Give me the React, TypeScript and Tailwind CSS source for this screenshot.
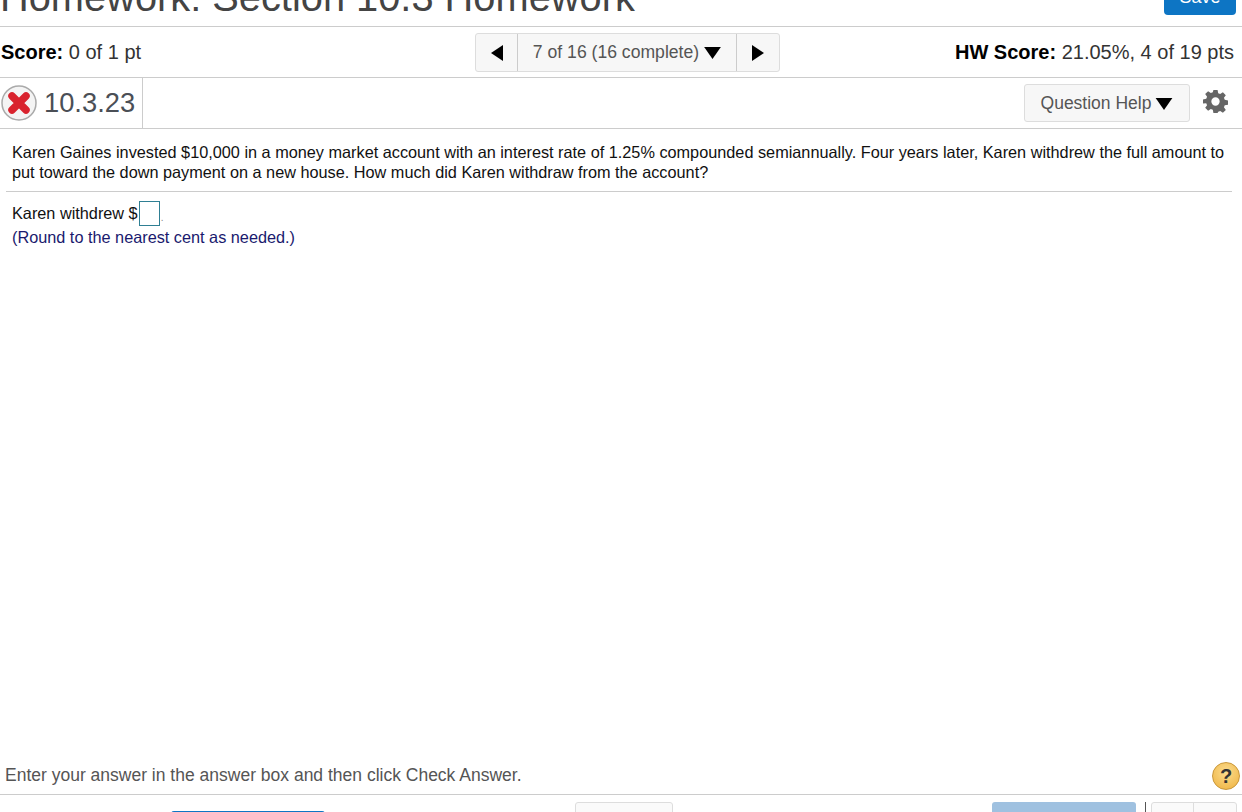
import React from 'react';

const Caret = ({ className }: { className: string }) => (
  <svg className={className} viewBox="0 0 18 14" fill="currentColor">
    <path d="M0 1h18L9 14z" />
  </svg>
);

export default function App() {
  return (
    <div className="h-[812px] overflow-hidden bg-white flex flex-col font-['Liberation_Sans',Arial,sans-serif] text-[#333]">
      {/* Title bar, cut off by the top of the window */}
      <header className="h-[27px] flex-none border-b border-[#ccc] flex justify-between overflow-hidden">
        <h1 className="text-[39.8px] leading-[44px] -mt-[25px] text-[#444] whitespace-nowrap font-normal">
          Homework: Section 10.3 Homework
        </h1>
        <button className="w-[72px] h-[15px] mr-[6px] bg-[#0d75c4] rounded-b-[4px] text-white text-[18px] leading-[18px] overflow-hidden flex-none">
          <span className="block -mt-[20px]">Save</span>
        </button>
      </header>

      {/* Score row */}
      <div className="h-[51px] flex-none border-b border-[#ccc] flex items-center justify-between pl-[1px] pr-[8px] text-[20px] relative">
        <div className="text-[#333]">
          <b className="text-black">Score:</b> 0 of 1 pt
        </div>
        <div className="absolute left-[475px] top-[6px] h-[39px] w-[305px] flex border border-[#ddd] rounded-[3px] bg-[#f7f7f7] text-[#555] text-[17.6px]">
          <div className="w-[42px] flex items-center justify-center border-r border-[#ccc]">
            <svg className="w-[12px] h-[16px] text-black" viewBox="0 0 12 16" fill="currentColor">
              <path d="M12 0v16L0 8z" />
            </svg>
          </div>
          <div className="flex-1 flex items-center justify-center gap-[5px]">
            <span>7 of 16 (16 complete)</span>
            <Caret className="w-[17px] h-[13px] text-black" />
          </div>
          <div className="w-[43px] flex items-center justify-center border-l border-[#ccc]">
            <svg className="w-[12px] h-[16px] text-black" viewBox="0 0 12 16" fill="currentColor">
              <path d="M0 0v16l12-8z" />
            </svg>
          </div>
        </div>
        <div className="text-[#333]">
          <b className="text-black">HW Score:</b> 21.05%, 4 of 19 pts
        </div>
      </div>

      {/* Question number row */}
      <div className="h-[51px] flex-none border-b border-[#ccc] flex items-center justify-between pr-[14px]">
        <div className="flex items-center h-full">
          <svg className="w-[36px] h-[36px] ml-[1px]" viewBox="0 0 36 36">
            <circle cx="18" cy="18" r="17" fill="#f4f4f4" stroke="#aaa" strokeWidth="1.5" />
            <path d="M11 11L25 25M25 11L11 25" stroke="#d9232e" strokeWidth="7.5" strokeLinecap="round" />
          </svg>
          <span className="ml-[7px] text-[27.3px] text-[#4b4f56]">10.3.23</span>
          <div className="ml-[7px] w-px h-full bg-[#ccc]" />
        </div>
        <div className="flex items-center gap-[13px]">
          <div className="w-[166px] h-[38px] flex items-center justify-center gap-[4px] border border-[#ddd] rounded-[3px] bg-[#f7f7f7] text-[17.5px] text-[#555]">
            <span>Question Help</span>
            <Caret className="w-[18px] h-[13px] text-black" />
          </div>
          <svg className="w-[25px] h-[25px] -mt-[3px] text-[#666]" viewBox="0 0 24 24" fill="currentColor">
            <path
              fillRule="evenodd"
              d="M10 1h4l.6 3.1 1.9.8 2.6-1.8 2.8 2.8-1.8 2.6.8 1.9 3.1.6v4l-3.1.6-.8 1.9 1.8 2.6-2.8 2.8-2.6-1.8-1.9.8L14 23h-4l-.6-3.1-1.9-.8-2.6 1.8-2.8-2.8 1.8-2.6-.8-1.9L0 14v-4l3.1-.6.8-1.9L2.100 4.900l2.800-2.800 2.600 1.800 1.900-.8zM12 8a4 4 0 100 8 4 4 0 000-8z"
            />
          </svg>
        </div>
      </div>

      {/* Question body */}
      <main className="flex-1 pl-[6px] pr-[10px]">
        <p className="pl-[6px] pr-[2px] pt-[13px] pb-[9px] text-[16.27px] leading-[20px] text-[#111] border-b border-[#ccc]">
          Karen Gaines invested $10,000 in a money market account with an interest rate of 1.25% compounded semiannually. Four years later, Karen withdrew the full amount to put toward the down payment on a new house. How much did Karen withdraw from the account?
        </p>
        <div className="px-[6px] pt-[9px] text-[16.27px] text-[#111]">
          <div className="flex items-center h-[24px]">
            <span>Karen withdrew $</span>
            <span className="ml-[1px] w-[21px] h-[25px] border border-[#2f7f93] bg-white" />
            <span className="ml-[1px] text-[#888] text-[10px] self-end">.</span>
          </div>
          <div className="h-[24px] leading-[24px] text-[#1a1a6e]">(Round to the nearest cent as needed.)</div>
        </div>
      </main>

      {/* Hint line */}
      <div className="h-[38px] flex-none border-b border-[#ccc] flex items-center justify-between pl-[5px] pr-[2px] text-[17.5px] text-[#555]">
        <span>Enter your answer in the answer box and then click Check Answer.</span>
        <div className="w-[28px] h-[28px] rounded-full bg-[radial-gradient(circle_at_50%_35%,#fbdc8e,#eeb13d)] border border-[#c9973a] flex items-center justify-center text-[20px] font-bold text-[#333]">
          ?
        </div>
      </div>

      {/* Bottom buttons, cut off by the window */}
      <footer className="h-[17px] flex-none overflow-hidden flex items-start relative">
        <div className="absolute left-[171px] top-[16px] w-[154px] h-[4px] bg-[#0d75c4] rounded-t-[3px]" />
        <div className="absolute left-[575px] top-[7px] w-[98px] h-[20px] border border-[#ddd] rounded-t-[3px] bg-[#fafafa]" />
        <div className="absolute left-[992px] top-[7px] w-[144px] h-[20px] bg-[#9fc1e0] rounded-t-[3px]" />
        <div className="absolute left-[1145px] top-[7px] w-px h-[20px] bg-[#555]" />
        <div className="absolute left-[1151px] top-[7px] w-[86px] h-[20px] border border-[#ddd] rounded-t-[3px] bg-[#fafafa] flex">
          <div className="w-[42px] border-r border-[#ddd]" />
        </div>
      </footer>
    </div>
  );
}
